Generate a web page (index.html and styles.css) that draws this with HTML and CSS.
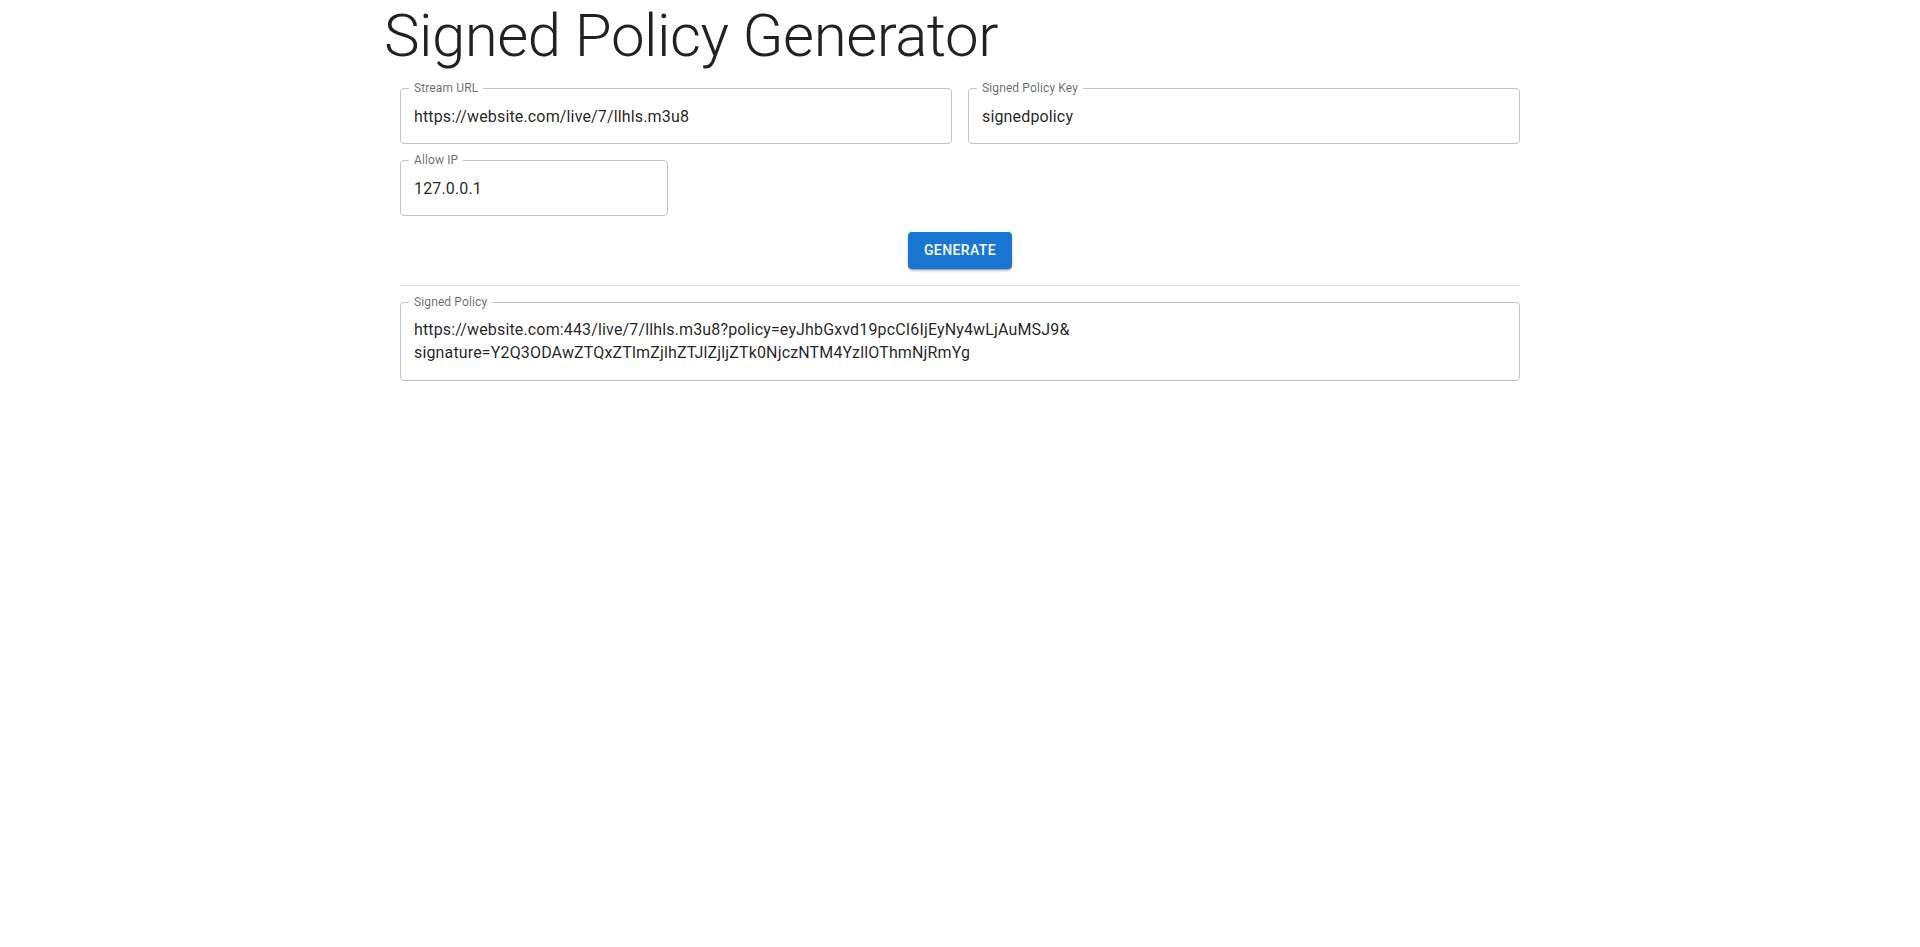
FILE: index.html
```html
<!DOCTYPE html>
<html lang="en">
<head>
<meta charset="utf-8">
<title>Signed Policy Generator</title>
<link rel="stylesheet" href="styles.css">
</head>
<body>
<main class="container">
  <h1 class="title">Signed Policy Generator</h1>
  <form class="form">
    <div class="field span-2">
      <label class="field-label" for="stream">Stream URL</label>
      <input id="stream" class="field-input" type="text" value="https://website.com/live/7/llhls.m3u8">
    </div>
    <div class="field span-2">
      <label class="field-label" for="key">Signed Policy Key</label>
      <input id="key" class="field-input" type="text" value="signedpolicy">
    </div>
    <div class="field span-1">
      <label class="field-label" for="ip">Allow IP</label>
      <input id="ip" class="field-input" type="text" value="127.0.0.1">
    </div>
    <div class="actions span-4">
      <button type="button" class="btn">Generate</button>
    </div>
    <hr class="divider span-4">
    <div class="field span-4">
      <label class="field-label" for="out">Signed Policy</label>
      <textarea id="out" class="field-input field-area" rows="2">https://website.com:443/live/7/llhls.m3u8?policy=eyJhbGxvd19pcCI6IjEyNy4wLjAuMSJ9&amp;
signature=Y2Q3ODAwZTQxZTlmZjlhZTJlZjljZTk0NjczNTM4YzllOThmNjRmYg</textarea>
    </div>
  </form>
</main>
</body>
</html>
```
FILE: styles.css
```css
html, body {
  margin: 0;
  padding: 0;
  background: #fff;
}

body {
  font-family: Roboto, "Noto Sans", Arial, sans-serif;
  color: rgba(0, 0, 0, 0.87);
}

.container {
  box-sizing: border-box;
  max-width: 1200px;
  margin: 0 auto;
  padding: 0 24px;
}

.title {
  margin: 0;
  font-family: Roboto, sans-serif;
  font-weight: 300;
  font-size: 60px;
  line-height: 72px;
  letter-spacing: -0.5px;
  color: rgba(0, 0, 0, 0.87);
}

.form {
  display: grid;
  grid-template-columns: repeat(4, 1fr);
  gap: 16px;
  padding: 16px;
}

.span-1 { grid-column: span 1; }
.span-2 { grid-column: span 2; }
.span-4 { grid-column: span 4; }

.field {
  position: relative;
  border: 1px solid rgba(0, 0, 0, 0.23);
  border-radius: 4px;
  min-width: 0;
}

.field-label {
  position: absolute;
  top: -7px;
  left: 8px;
  padding: 0 5px;
  background: #fff;
  font-size: 12px;
  line-height: 12px;
  color: rgba(0, 0, 0, 0.6);
  letter-spacing: 0.01em;
}

.field-input {
  display: block;
  box-sizing: content-box;
  width: calc(100% - 26px);
  height: 23px;
  margin: 0;
  padding: 15.5px 13px;
  border: 0;
  outline: none;
  background: transparent;
  font-family: Roboto, sans-serif;
  font-size: 16px;
  line-height: 23px;
  letter-spacing: 0.00938em;
  color: rgba(0, 0, 0, 0.87);
}

.field-area {
  height: 46px;
  resize: none;
  overflow: hidden;
  white-space: pre-wrap;
}

.actions {
  display: flex;
  justify-content: center;
}

.btn {
  font-family: Roboto, sans-serif;
  font-weight: 500;
  font-size: 14px;
  line-height: 24.5px;
  letter-spacing: 0.4px;
  text-transform: uppercase;
  color: #fff;
  background: #1976d2;
  border: 0;
  border-radius: 4px;
  padding: 6px 16px;
  min-width: 64px;
  box-shadow: 0 3px 1px -2px rgba(0, 0, 0, 0.2), 0 2px 2px 0 rgba(0, 0, 0, 0.14), 0 1px 5px 0 rgba(0, 0, 0, 0.12);
  cursor: pointer;
}

.divider {
  margin: 0;
  height: 0;
  border: 0;
  border-top: 1px solid rgba(0, 0, 0, 0.12);
}
```
